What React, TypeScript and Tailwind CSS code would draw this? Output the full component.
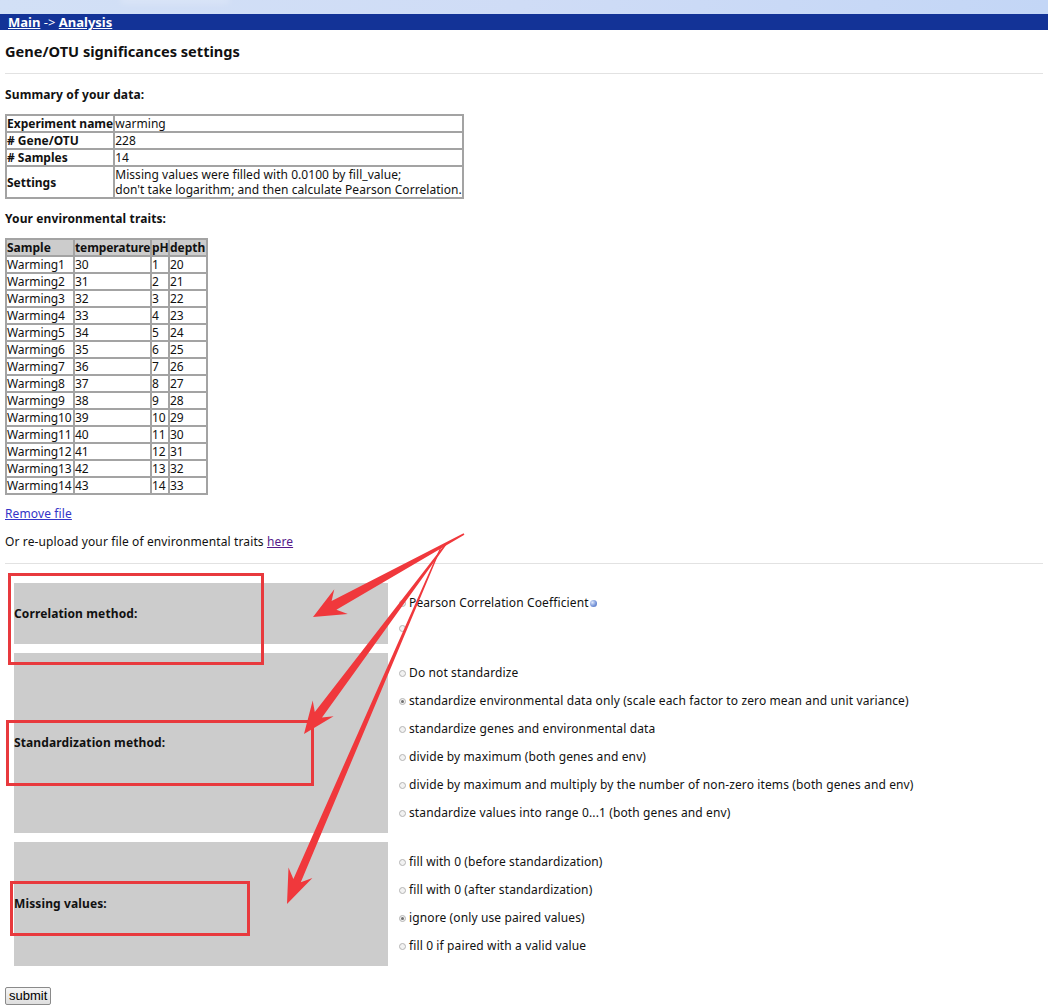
import React from 'react';

const font = { fontFamily: '"Noto Sans", "Liberation Sans", sans-serif' };

const summaryRows = [
  { label: 'Experiment name', value: ['warming'] },
  { label: '# Gene/OTU', value: ['228'] },
  { label: '# Samples', value: ['14'] },
  {
    label: 'Settings',
    value: [
      'Missing values were filled with 0.0100 by fill_value;',
      "don't take logarithm; and then calculate Pearson Correlation.",
    ],
  },
];

const samples = Array.from({ length: 14 }, (_, i) => ({
  name: `Warming${i + 1}`,
  temperature: 30 + i,
  ph: i + 1,
  depth: 20 + i,
}));

const standardization = [
  { text: 'Do not standardize' },
  { text: 'standardize environmental data only (scale each factor to zero mean and unit variance)', checked: true },
  { text: 'standardize genes and environmental data' },
  { text: 'divide by maximum (both genes and env)' },
  { text: 'divide by maximum and multiply by the number of non-zero items (both genes and env)' },
  { text: 'standardize values into range 0...1 (both genes and env)' },
];

const missing = [
  { text: 'fill with 0 (before standardization)' },
  { text: 'fill with 0 (after standardization)' },
  { text: 'ignore (only use paired values)', checked: true },
  { text: 'fill 0 if paired with a valid value' },
];

const Radio = ({ checked }: { checked?: boolean }) => (
  <span className="inline-flex w-[7px] h-[7px] rounded-full border border-[#b4b4b4] bg-[#f2f2f2] items-center justify-center mr-[3px] shrink-0">
    {checked && <span className="w-[3px] h-[3px] rounded-full bg-[#707070]" />}
  </span>
);

const Option = ({ text, checked }: { text: string; checked?: boolean }) => (
  <div className="flex items-center h-[28px]">
    <Radio checked={checked} />
    <span>{text}</span>
  </div>
);

// tapered annotation arrow, thin at the start, wide head at the tip
const arrowPoints = (sx: number, sy: number, tx: number, ty: number, w0: number, w1: number, head: number, half: number) => {
  const len = Math.hypot(tx - sx, ty - sy);
  const dx = (tx - sx) / len;
  const dy = (ty - sy) / len;
  const nx = -dy;
  const ny = dx;
  const bx = tx - dx * head;
  const by = ty - dy * head;
  const nb = bx + dx * head * 0.25;
  const nby = by + dy * head * 0.25;
  const p = [
    [sx + nx * w0, sy + ny * w0],
    [nb + nx * w1, nby + ny * w1],
    [bx + nx * half, by + ny * half],
    [tx, ty],
    [bx - nx * half, by - ny * half],
    [nb - nx * w1, nby - ny * w1],
    [sx - nx * w0, sy - ny * w0],
  ];
  return p.map(([x, y]) => `${x.toFixed(1)},${y.toFixed(1)}`).join(' ');
};

const Annotations = () => (
  <svg className="absolute left-0 top-0 pointer-events-none" width="1048" height="1005">
    <g fill="none" stroke="#e8393d" strokeWidth="3">
      <rect x="9.5" y="574.5" width="253" height="89" />
      <rect x="7.5" y="721.5" width="305" height="63" />
      <rect x="11.5" y="882.5" width="237" height="52" />
    </g>
    <g fill="#f0383c">
      <polygon points={arrowPoints(464, 534, 313, 617, 0.8, 5, 32, 14)} />
      <polygon points={arrowPoints(446, 544, 304, 734, 0.8, 4.5, 32, 13)} />
      <polygon points={arrowPoints(441, 547, 287, 904, 0.5, 4, 34, 13)} />
    </g>
  </svg>
);

const cell = 'border-2 border-[#a3a3a3] p-0 leading-[15px] whitespace-nowrap';

export default function App() {
  return (
    <div className="relative w-[1048px] min-h-[1005px] bg-white text-[12px] tracking-[0.12px] text-[#111]" style={font}>
      <div className="h-[14px] bg-gradient-to-r from-[#d2e0f6] via-[#cfdcf6] to-[#c3d6f6] relative overflow-hidden">
        <div className="absolute left-[120px] top-[-4px] w-[110px] h-[8px] rounded-full bg-white/20 blur-[3px]" />
      </div>
      <div className="h-[16px] bg-[#133397] pl-[8px] text-[13px] font-bold leading-[16px] text-white tracking-normal">
        <span className="underline">Main</span>
        <span className="font-normal"> -&gt; </span>
        <span className="underline">Analysis</span>
      </div>

      <div className="px-[5px]">
        <h1 className="mt-[11px] text-[14.6px] font-bold leading-[20px] tracking-normal">Gene/OTU significances settings</h1>
        <div className="mt-[12px] border-t border-[#e2e2e2]" />

        <div className="mt-[13px] font-bold leading-[16px]">Summary of your data:</div>
        <table className="mt-[11px] border-collapse w-[458px] tracking-[0.05px]">
          <tbody>
            {summaryRows.map((r) => (
              <tr key={r.label}>
                <td className={`${cell} w-[108px] font-bold tracking-normal`}>{r.label}</td>
                <td className={cell}>
                  {r.value.map((v) => (
                    <div key={v}>{v}</div>
                  ))}
                </td>
              </tr>
            ))}
          </tbody>
        </table>

        <div className="mt-[12px] font-bold leading-[16px]">Your environmental traits:</div>
        <table className="mt-[11px] border-collapse table-fixed w-[201px] tracking-normal">
          <colgroup>
            <col className="w-[68px]" />
            <col className="w-[77px]" />
            <col className="w-[18px]" />
            <col className="w-[38px]" />
          </colgroup>
          <tbody>
            <tr className="bg-[#cccccc] font-bold">
              <td className={cell}>Sample</td>
              <td className={`${cell} tracking-[-0.1px]`}>temperature</td>
              <td className={cell}>pH</td>
              <td className={cell}>depth</td>
            </tr>
            {samples.map((s) => (
              <tr key={s.name}>
                <td className={`${cell} tracking-[-0.1px]`}>{s.name}</td>
                <td className={cell}>{s.temperature}</td>
                <td className={cell}>{s.ph}</td>
                <td className={cell}>{s.depth}</td>
              </tr>
            ))}
          </tbody>
        </table>

        <div className="mt-[11px] leading-[16px]">
          <span className="text-[#3434c8] underline">Remove file</span>
        </div>
        <div className="mt-[12px] leading-[16px]">
          Or re-upload your file of environmental traits <span className="text-[#55198b] underline">here</span>
        </div>
        <div className="mt-[13px] border-t border-[#e2e2e2]" />

        <div className="mt-[19px] pl-[9px] flex flex-col gap-[9px]">
          <div className="flex">
            <div className="w-[374px] h-[61px] bg-[#cccccc] flex items-center font-bold">Correlation method:</div>
            <div className="pl-[11px] pt-[6px]">
              <div className="flex items-center h-[28px]">
                <Radio />
                <span>Pearson Correlation Coefficient</span>
                <span className="ml-[1px] w-[7px] h-[7px] rounded-full bg-[radial-gradient(circle_at_35%_35%,#dfe8fb,#6f8fd6_60%,#4a68b8)]" />
              </div>
              <div className="flex items-center h-[22px]">
                <Radio />
              </div>
            </div>
          </div>

          <div className="flex">
            <div className="w-[374px] h-[180px] bg-[#cccccc] flex items-center font-bold">Standardization method:</div>
            <div className="pl-[11px] pt-[6px]">
              {standardization.map((o) => (
                <Option key={o.text} text={o.text} checked={o.checked} />
              ))}
            </div>
          </div>

          <div className="flex">
            <div className="w-[374px] h-[124px] bg-[#cccccc] flex items-center font-bold">Missing values:</div>
            <div className="pl-[11px] pt-[6px]">
              {missing.map((o) => (
                <Option key={o.text} text={o.text} checked={o.checked} />
              ))}
            </div>
          </div>
        </div>

        <button
          className="mt-[21px] h-[18px] px-[3px] border border-[#8a8a8a] rounded-[2px] bg-gradient-to-b from-[#f6f6f6] to-[#dedede] text-[13px] leading-[14px] text-black tracking-normal"
          style={{ fontFamily: '"Liberation Sans", Arial, sans-serif' }}
        >
          submit
        </button>
      </div>

      <Annotations />
    </div>
  );
}
